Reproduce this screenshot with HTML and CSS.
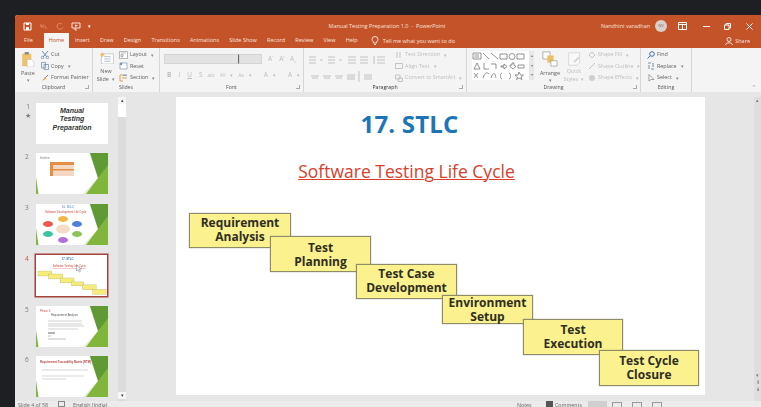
FILE: index.html
```html
<!DOCTYPE html>
<html lang="en">
<head>
<meta charset="utf-8">
<title>Manual Testing Preparation 1.0 - PowerPoint</title>
<link rel="stylesheet" href="styles.css">
</head>
<body>
<svg class="defs" width="0" height="0">
  <symbol id="green" viewBox="0 0 72 41">
    <path d="M47 41L62 25L53 0H72V41Z" fill="#e4ecd8"/>
    <path d="M54 0H72V22L62 25Z" fill="#5f9a34"/>
    <path d="M62 25L72 12V41H50Z" fill="#82b53c"/>
    <path d="M0 41V24L2.500 41Z" fill="#84b53f"/>
  </symbol>
</svg>
<div class="window">
  <header class="titlebar">
    <div class="qat">
      <svg width="9" height="9" viewBox="0 0 9 9"><path d="M1 1H8V8H1Z" fill="none" stroke="#fff"/><path d="M3 1H6V3H3ZM3 5H6V8H3Z" fill="#fff"/></svg>
      <svg class="dim" width="9" height="9" viewBox="0 0 9 9"><path d="M2 2V5H5M2 5C4 2 7 3 7 7" fill="none" stroke="#e08a68"/></svg>
      <svg class="dim" width="9" height="9" viewBox="0 0 9 9"><path d="M7 2A3 3 0 1 0 8 5" fill="none" stroke="#e08a68"/></svg>
      <svg width="10" height="9" viewBox="0 0 10 9"><path d="M1 1H9V6H1ZM4 6V8H6" fill="none" stroke="#f6e2d8"/><path d="M4 2.500L7 3.500L4 5Z" fill="#f6e2d8"/></svg>
      <span class="qat-more">▾</span>
    </div>
    <div class="doc-title">Manual Testing Preparation 1.0 &nbsp;-&nbsp; PowerPoint</div>
    <div class="win-tools">
      <span class="user">Nandhini varadhan</span>
      <span class="avatar">NV</span>
      <svg class="tool-box" width="9" height="8" viewBox="0 0 9 8"><path d="M.5.5H8.500V7.500H.5ZM.5 2.500H8.500M4.500 2.500V7.500" fill="none" stroke="#fff"/></svg>
      <svg class="tool-min" width="7" height="7" viewBox="0 0 7 7"><path d="M0 3.500H7" stroke="#fff"/></svg>
      <svg class="tool-max" width="7" height="7" viewBox="0 0 7 7"><path d="M.5 2H5V6.500H.5ZM2 2V.5H6.500V5H5" fill="none" stroke="#fff"/></svg>
      <svg class="tool-x" width="7" height="7" viewBox="0 0 7 7"><path d="M.5.5L6.500 6.500M6.500.5L.5 6.500" stroke="#fff"/></svg>
    </div>
  </header>

  <nav class="tabs">
    <span class="tab">File</span>
    <span class="tab active">Home</span>
    <span class="tab">Insert</span>
    <span class="tab">Draw</span>
    <span class="tab">Design</span>
    <span class="tab">Transitions</span>
    <span class="tab">Animations</span>
    <span class="tab">Slide Show</span>
    <span class="tab">Record</span>
    <span class="tab">Review</span>
    <span class="tab">View</span>
    <span class="tab">Help</span>
    <span class="tell">
      <svg width="8" height="10" viewBox="0 0 8 10"><path d="M2.500 7C2.500 5 1 5 1 3.500A3 3 0 0 1 7 3.500C7 5 5.500 5 5.500 7ZM3 8.500H5" fill="none" stroke="#fff" stroke-width=".8"/></svg>
      Tell me what you want to do
    </span>
    <span class="share">
      <svg width="8" height="8" viewBox="0 0 8 8"><circle cx="4" cy="2.500" r="2" fill="none" stroke="#fff" stroke-width=".8"/><path d="M.5 8C1 5 7 5 7.500 8" fill="none" stroke="#fff" stroke-width=".8"/></svg>
      Share
    </span>
  </nav>

  <section class="ribbon">
    <div class="group g-clip">
      <div class="group-body">
        <div class="big paste">
          <svg width="14" height="18" viewBox="0 0 14 18"><path d="M0 2H11V17H0Z" fill="#eec36a"/><path d="M3 0H8V3H3Z" fill="#8a8a8a"/><path d="M6 9H11L14 12V18H6Z" fill="#fff" stroke="#aaa" stroke-width=".5"/></svg>
          <span>Paste</span>
          <i class="caret">▾</i>
        </div>
        <div class="rows">
          <div class="row"><svg width="8" height="8" viewBox="0 0 8 8"><path d="M1 0L6 6M7 0L2 6" stroke="#6d87a8" fill="none"/><circle cx="1.500" cy="6.500" r="1.300" fill="none" stroke="#6d87a8" stroke-width=".7"/><circle cx="6.500" cy="6.500" r="1.300" fill="none" stroke="#6d87a8" stroke-width=".7"/></svg>Cut</div>
          <div class="row"><svg width="8" height="8" viewBox="0 0 8 8"><path d="M.5.5H4.500V6H.5ZM3 2.500H7.500V7.500H3Z" fill="#eef2f7" stroke="#6d87a8" stroke-width=".7"/></svg>Copy <i class="caret side">▾</i></div>
          <div class="row"><svg width="8" height="8" viewBox="0 0 8 8"><path d="M4 4L7 1" stroke="#8c6fb0"/><path d="M1 7L4 3L5 5Z" fill="#e3a63c"/></svg>Format Painter</div>
        </div>
      </div>
      <div class="group-label">Clipboard<b class="launch"></b></div>
    </div>

    <div class="group g-slides">
      <div class="group-body">
        <div class="big newslide">
          <svg width="15" height="13" viewBox="0 0 15 13"><path d="M2 2H15V13H2Z" fill="#fff" stroke="#a9a9a9" stroke-width=".6"/><path d="M5 5H12M5 7.500H12M5 10H12" stroke="#8aa0bb" stroke-width=".7"/><path d="M3 0L4 2L6 3L4 4L3 6L2 4L0 3L2 2Z" fill="#edc05b"/></svg>
          <span>New<br>Slide <i class="caret side">▾</i></span>
        </div>
        <div class="rows">
          <div class="row"><svg width="9" height="8" viewBox="0 0 9 8"><path d="M.5.5H8.500V7.500H.5ZM2 2H7M2 3.500V6H4V3.500Z" fill="#fff" stroke="#8a8a8a" stroke-width=".6"/></svg>Layout <i class="caret side">▾</i></div>
          <div class="row"><svg width="9" height="8" viewBox="0 0 9 8"><path d="M1 1H8V7H1Z" fill="#fff" stroke="#7f94ad" stroke-width=".7"/><path d="M.5 2L3 .5V3.500Z" fill="#5b7fae"/></svg>Reset</div>
          <div class="row"><svg width="9" height="8" viewBox="0 0 9 8"><path d="M1 1H4M1 1V7H4M3 4H8" stroke="#d6a24a" fill="none"/><path d="M4 .5H8V2H4Z" fill="#8da6c4"/></svg>Section <i class="caret side">▾</i></div>
        </div>
      </div>
      <div class="group-label">Slides</div>
    </div>

    <div class="group g-font">
      <div class="group-body col">
        <div class="font-top">
          <span class="fbox name"></span><span class="fbox size"></span>
          <span class="off glyph first">A<sup>^</sup></span><span class="off glyph">A<sup>v</sup></span><span class="off glyph wide">A<sub>o</sub></span>
        </div>
        <div class="font-bottom off">
          <b>B</b><i>I</i><u>U</u><span>S</span><span class="tiny">abc</span><span class="tiny">AV</span><span class="tiny">▾</span><span class="tiny">Aa</span><span class="tiny">▾</span><span class="gapl">A</span><span class="tiny">▾</span><span class="gapl">A</span><span class="tiny">▾</span>
        </div>
      </div>
      <div class="group-label">Font<b class="launch"></b></div>
    </div>

    <div class="group g-para">
      <div class="group-body">
        <div class="para-icons">
          <svg width="84" height="32" viewBox="0 0 84 32">
            <g fill="none" stroke="#bcbcbc" stroke-width=".9">
              <path d="M2 6H9M2 9H9M2 12H9M13 9H16"/>
              <path d="M21 6H28M21 9H28M21 12H28M32 9H35"/>
              <path d="M41 6H49M41 9H49M41 12H49"/>
              <path d="M53 6H61M53 9H61M53 12H61"/>
              <path d="M67 5V13M70 6H78M70 9H78M70 12H78"/>
              <path d="M4 25H12M5 27H11"/>
              <path d="M16 25H24M17 27H23"/>
              <path d="M28 25H36M29 27H35"/>
              <path d="M40 24H48M40 26H48M40 28H48"/>
              <path d="M52 20V31M57 24H65M57 26H65M57 28H65"/>
            </g>
          </svg>
        </div>
        <div class="rows text-dir off">
          <div class="row"><svg width="8" height="8" viewBox="0 0 8 8"><path d="M2 1V7M5 1V7" stroke="#c4c4c4"/></svg>Text Direction <i class="caret side">▾</i></div>
          <div class="row"><svg width="8" height="8" viewBox="0 0 8 8"><path d="M.5 1.500H7.500V6.500H.5Z" fill="none" stroke="#c4c4c4"/></svg>Align Text <i class="caret side">▾</i></div>
          <div class="row"><svg width="8" height="8" viewBox="0 0 8 8"><path d="M.5 1H5V5H.5ZM3 4H7.500V7.500H3Z" fill="none" stroke="#c4c4c4"/></svg>Convert to SmartArt <i class="caret side">▾</i></div>
        </div>
      </div>
      <div class="group-label strong">Paragraph<b class="launch"></b></div>
    </div>

    <div class="group g-draw">
      <div class="group-body">
        <div class="gallery">
          <svg width="57" height="29" viewBox="0 0 57 29">
            <g fill="none" stroke="#666" stroke-width=".7">
              <path d="M1 2H9V8H1ZM2.500 4H7M2.500 6H7"/><path d="M11 2L17 8M19 2L26 8"/><path d="M28 3H35V8H28Z"/><circle cx="40" cy="5.500" r="3"/><path d="M45 3H52V8H45Z"/>
              <path d="M2 18L5 12L8 18Z"/><path d="M12 12V18H17"/><path d="M19 13H24V18"/><path d="M29 15H32V13L35 15.500L32 18V16H29Z"/><path d="M38 14H40V12H42V14L44 15.500L41 18L38 15.500Z"/><path d="M46 14H52V17H46Z"/>
              <path d="M2 22L6 27M6 22L2 27"/><path d="M11 27C13 21 15 21 17 23"/><path d="M19 27C21 21 23 21 24 27"/><path d="M30 22C28 22 29 25 28 25C29 25 28 28 30 28"/><path d="M37 22C39 22 38 25 39 25C38 25 39 28 37 28"/><path d="M47 21L48.500 24H51.500L49 26L50 28.500L47 27L44.500 28.500L45.500 26L43 24H46Z"/>
            </g>
          </svg>
          <div class="gallery-bar"><span>▴</span><span>▾</span><span>▾</span></div>
        </div>
        <div class="big arrange">
          <svg width="18" height="18" viewBox="0 0 18 18"><path d="M1 1H9V9H1Z" fill="#fff" stroke="#8a8a8a" stroke-width=".7"/><path d="M6 5H13V13H6Z" fill="#edc05b"/><path d="M10 11H17V17H10Z" fill="#fff" stroke="#8a8a8a" stroke-width=".7"/></svg>
          <span>Arrange</span>
          <i class="caret">▾</i>
        </div>
        <div class="big quick off">
          <svg width="17" height="18" viewBox="0 0 17 18"><path d="M1 1H15V14L12 17H1Z" fill="#f8f8f8" stroke="#d2d2d2"/><path d="M8 13L14 7" stroke="#cfcfcf" stroke-width="2"/></svg>
          <span>Quick<br>Styles <i class="caret side">▾</i></span>
        </div>
        <div class="rows shape off">
          <div class="row"><svg width="8" height="8" viewBox="0 0 8 8"><path d="M1 4L4 1L7 4L4 7Z" fill="none" stroke="#c4c4c4"/></svg>Shape Fill <i class="caret side">▾</i></div>
          <div class="row"><svg width="8" height="8" viewBox="0 0 8 8"><path d="M1 7L7 1" stroke="#c4c4c4"/></svg>Shape Outline <i class="caret side">▾</i></div>
          <div class="row"><svg width="8" height="8" viewBox="0 0 8 8"><circle cx="4" cy="4" r="3" fill="#cfcfcf"/></svg>Shape Effects <i class="caret side">▾</i></div>
        </div>
      </div>
      <div class="group-label">Drawing<b class="launch"></b></div>
    </div>

    <div class="group g-edit">
      <div class="group-body">
        <div class="rows">
          <div class="row"><svg width="8" height="8" viewBox="0 0 8 8"><circle cx="5" cy="3" r="2.300" fill="none" stroke="#3f6fa8"/><path d="M3.500 4.500L.5 7.500" stroke="#3f6fa8"/></svg>Find</div>
          <div class="row"><svg width="8" height="8" viewBox="0 0 8 8"><path d="M1 1H4M4 7H7M6 1V5M2 3V7" stroke="#7a8b9e"/></svg>Replace <i class="caret side">▾</i></div>
          <div class="row"><svg width="8" height="8" viewBox="0 0 8 8"><path d="M2 .5V7L4 5.500H7Z" fill="#fff" stroke="#7a7a7a" stroke-width=".7"/></svg>Select <i class="caret side">▾</i></div>
        </div>
      </div>
      <div class="group-label">Editing</div>
    </div>
    <div class="collapse">⌃</div>
  </section>
  <div class="ribbon-foot"></div>

  <main class="workspace">
    <aside class="thumbs">
      <div class="thumb-row">
        <div class="num">1<br>★</div>
        <div class="thumb t1">Manual<br>Testing<br>Preparation</div>
      </div>
      <div class="thumb-row">
        <div class="num">2</div>
        <svg class="thumb" viewBox="0 0 72 41">
          <use href="#green"/>
          <text x="4" y="6" class="tiny-t big-t" fill="#888">Index</text>
          <rect x="14" y="9" width="24" height="14" fill="#f3d9c4"/><rect x="14" y="9" width="24" height="3" fill="#e58e45"/><rect x="14" y="16" width="24" height="1.500" fill="#e58e45"/><rect x="14" y="9" width="3" height="14" fill="#e58e45"/>
        </svg>
      </div>
      <div class="thumb-row">
        <div class="num">3</div>
        <svg class="thumb" viewBox="0 0 72 41">
          <use href="#green"/>
          <text x="26" y="4" class="tiny-t" fill="#3d78b8">16. SDLC</text>
          <text x="9" y="9" class="tiny-t" fill="#d0443a">Software Development Life Cycle</text>
          <ellipse cx="27" cy="15" rx="5" ry="3" fill="#f0b945"/><ellipse cx="41" cy="20" rx="5" ry="3" fill="#4f7fd8"/><ellipse cx="41" cy="30" rx="5" ry="3" fill="#8cc45a"/><ellipse cx="27" cy="36" rx="5" ry="3" fill="#b071d8"/><ellipse cx="12" cy="30" rx="5" ry="3" fill="#3cc4a0"/><ellipse cx="12" cy="20" rx="5" ry="3" fill="#ec5a4c"/><ellipse cx="27" cy="25" rx="7" ry="4.500" fill="#f4dcc8"/>
        </svg>
      </div>
      <div class="thumb-row current">
        <div class="num">4</div>
        <svg class="thumb" viewBox="0 0 72 41">
          <text x="26" y="5" class="tiny-t b" fill="#3d78b8">17. STLC</text>
          <text x="17" y="12" class="tiny-t under" fill="#d0443a">Software Testing Life Cycle</text>
          <g fill="#f5ec7a" stroke="#a8a46a" stroke-width=".3">
            <rect x="2" y="16" width="14" height="5"/><rect x="13" y="19" width="14" height="5"/><rect x="24.500" y="23" width="14" height="5"/><rect x="36" y="27" width="12.500" height="4"/><rect x="47" y="30" width="14" height="5"/><rect x="57.500" y="34.500" width="13.600" height="5"/>
          </g>
          <path d="M41 10V16L42.500 14.500L44 17L45 16.500L44 14H46Z" fill="#fff" stroke="#444" stroke-width=".4"/>
        </svg>
      </div>
      <div class="thumb-row">
        <div class="num">5</div>
        <svg class="thumb" viewBox="0 0 72 41">
          <use href="#green"/>
          <text x="4" y="6" class="tiny-t" fill="#d0443a">Phase 1:</text>
          <text x="15" y="10" class="tiny-t" fill="#555">Requirement Analysis</text>
          <path d="M12 15H46M12 18H46M12 20H48M12 23H42" stroke="#b4b4b4" stroke-width=".6"/><path d="M12 27H19" stroke="#444" stroke-width=".8"/><path d="M12 30H15M12 33H30" stroke="#999" stroke-width=".6"/>
        </svg>
      </div>
      <div class="thumb-row">
        <div class="num">6</div>
        <svg class="thumb" viewBox="0 0 72 41">
          <use href="#green"/>
          <text x="4" y="7" class="tiny-t b" fill="#b5473f">Requirement Traceability Matrix (RTM)</text>
          <path d="M6 14H52M6 20H48M6 23H30" stroke="#c4c4c4" stroke-width=".7"/>
        </svg>
      </div>
    </aside>
    <div class="vscroll">
      <span class="arrow">▴</span><span class="vthumb"></span><span class="arrow end">▾</span>
    </div>
    <div class="canvas">
      <article class="slide">
        <h1>17. STLC</h1>
        <h2>Software Testing Life Cycle</h2>
        <div class="diagram">
          <div class="node n1">Requirement<br>Analysis</div>
          <div class="node n2">Test<br>Planning</div>
          <div class="node n3">Test Case<br>Development</div>
          <div class="node n4">Environment<br>Setup</div>
          <div class="node n5">Test<br>Execution</div>
          <div class="node n6">Test Cycle<br>Closure</div>
        </div>
      </article>
      <div class="canvas-bar"><span class="bar-top">▴</span><span>▾</span><span>⇞</span><span>⇟</span></div>
    </div>
  </main>

  <footer class="status">
    <span class="st-a">Slide 4 of 58</span>
    <span class="st-icon"></span>
    <span class="st-b">English (India)</span>
    <span class="st-c">Notes</span>
    <span class="st-dark"></span>
    <span class="st-d">Comments</span>
    <span class="st-e active"></span><span class="st-e"></span><span class="st-e"></span><span class="st-e"></span>
    <span class="st-f"></span>
  </footer>
</div>
</body>
</html>
```

FILE: styles.css
```css
* { box-sizing: border-box; }
html, body { margin: 0; height: 100%; }
body {
  background: #1d1f23;
  padding: 15px 0 0 15px;
  overflow: hidden;
  font-family: "Open Sans", "Liberation Sans", sans-serif;
}
.defs { position: absolute; }
.window {
  height: 392px;
  display: flex;
  flex-direction: column;
  background: #e6e6e6;
  border-radius: 3px 0 0 0;
  overflow: hidden;
  filter: blur(.3px);
}

/* title bar */
.titlebar {
  height: 18px;
  flex: none;
  background: #c5532a;
  color: #fff;
  display: flex;
  align-items: center;
  font-size: 5.500px;
  padding-top: 4px;
  white-space: nowrap;
}
.qat { width: 261px; flex: none; display: flex; align-items: center; gap: 7px; padding-left: 8px; }
.qat-more { font-size: 5px; }
.doc-title { width: 222px; flex: none; text-align: center; color: #f6e2d8; }
.win-tools { flex: 1; display: flex; align-items: center; padding-left: 103px; }
.user { color: #f6e2d8; width: 51px; flex: none; }
.avatar {
  width: 12px; height: 12px; border-radius: 50%; flex: none;
  background: #d9cfc9; color: #8a6a5e;
  font-size: 4px; text-align: center; line-height: 12px;
  margin-left: 3px;
}
.tool-box { margin-left: 11px; flex: none; }
.tool-min { margin-left: 16px; flex: none; }
.tool-max { margin-left: 14px; flex: none; }
.tool-x { margin-left: 15px; flex: none; }

/* tabs */
.tabs {
  height: 15px;
  flex: none;
  background: #c5532a;
  color: #f8e6dd;
  display: flex;
  align-items: center;
  font-size: 5.500px;
  padding-left: 4px;
  white-space: nowrap;
}
.tab { padding: 0 5.100px; height: 15px; line-height: 15px; flex: none; }
.tab.active { background: #f4f4f4; color: #c5532a; margin: 0 1px 0 6px; width: 25px; text-align: center; padding: 0; }
.tell { display: flex; align-items: center; gap: 4px; margin-left: 8px; }
.share { display: flex; align-items: center; gap: 2px; margin-left: auto; margin-right: 11px; }

/* ribbon */
.ribbon {
  height: 44px;
  flex: none;
  background: #f4f4f4;
  display: flex;
  position: relative;
  color: #606060;
  font-size: 5.400px;
  white-space: nowrap;
}
.ribbon-foot { height: 5px; flex: none; background: #e6e6e6; }
.group {
  display: flex;
  flex-direction: column;
  border-right: 1px solid #d6d6d6;
  position: relative;
  flex: none;
}
.group-body { flex: 1; display: flex; min-height: 0; }
.group-body.col { flex-direction: column; }
.group-label {
  height: 9px;
  text-align: center;
  font-size: 5.200px;
  line-height: 8px;
  color: #555;
}
.group-label.strong { color: #333; }
.launch {
  position: absolute; right: 3px; bottom: 3px;
  width: 4px; height: 4px;
  border-right: 1px solid #aaa; border-bottom: 1px solid #aaa;
}
.g-clip { width: 78px; }
.g-slides { width: 67px; }
.g-font { width: 144px; }
.g-para { width: 163px; }
.g-draw { width: 174px; }
.g-edit { width: 51px; }
.big {
  display: flex; flex-direction: column; align-items: center;
  text-align: center; line-height: 8px; flex: none;
}
.big span { margin-top: 2px; }
.caret { font-style: normal; font-size: 4.500px; line-height: 6px; color: #888; }
.caret.side { margin-left: 2px; }
.paste { width: 26px; padding-top: 4px; }
.rows { display: flex; flex-direction: column; padding-top: 2px; gap: 2px; }
.row { height: 9.500px; display: flex; align-items: center; gap: 2px; line-height: 9px; }
.off, .off .caret { color: #bdbdbd; }
.newslide { width: 26px; padding-top: 4px; }
.newslide span { margin-top: 3px; }

.font-top { display: flex; align-items: center; padding: 5px 0 0 4px; height: 17px; }
.fbox { height: 10px; background: #e2e2e2; border: 1px solid #d4d4d4; flex: none; }
.fbox.name { width: 75px; border-right: 1px solid #666; }
.fbox.size { width: 23px; }
.glyph { font-size: 6.500px; margin-left: 5px; }
.glyph.first { margin-left: 6px; }
.glyph sup, .glyph sub { font-size: 3.500px; }
.font-bottom { display: flex; align-items: center; gap: 7px; padding: 5px 0 0 7px; font-size: 6.500px; }
.font-bottom .tiny { font-size: 4.500px; margin-left: -2px; }
.font-bottom .gapl { margin-left: 5px; }

.para-icons { width: 91px; padding: 3px 0 0 3px; flex: none; }

.gallery { display: flex; margin: 3px 0 0 5px; height: 29px; flex: none; }
.gallery svg { background: #fff; }
.gallery-bar {
  width: 5px; display: flex; flex-direction: column;
  background: #e8e8e8; font-size: 4px; text-align: center; color: #777;
}
.gallery-bar span { flex: 1; line-height: 9px; }
.arrange { width: 24px; margin-left: 4px; padding-top: 3px; }
.quick { width: 20px; padding-top: 4px; margin-left: 2px; }
.quick span { margin-top: 1px; }
.shape { margin-left: 4px; }
.g-edit .rows { padding-left: 6px; }
.collapse {
  position: absolute; right: 4px; bottom: 0;
  font-size: 7px; color: #aaa; line-height: 8px;
}

/* workspace */
.workspace { flex: 1; min-height: 0; display: flex; overflow: hidden; }
.thumbs { width: 103px; flex: none; padding: 5.500px 0 0 0; display: flex; flex-direction: column; gap: 9.800px; }
.thumb-row { display: flex; height: 41px; flex: none; padding-left: 21px; position: relative; }
.num {
  position: absolute; left: 10px; top: -1px;
  font-size: 6.500px; line-height: 9px; color: #7a7a7a; text-align: center;
}
.thumb {
  width: 72px; height: 41px; background: #fff; display: block; flex: none;
}
.t1 {
  font: italic 700 7px/8.500px "Liberation Sans", sans-serif;
  color: #333;
  text-align: center;
  padding-top: 4px;
}
.current .num { color: #c0563a; }
.current .thumb { width: 71px; box-shadow: 0 0 0 1.500px #a4423e; }
.tiny-t { font: 2.800px "Liberation Sans", sans-serif; }
.tiny-t.b { font-weight: 700; }
.tiny-t.under { text-decoration: underline; }
.tiny-t.big-t { font-size: 4px; }

.vscroll {
  width: 8px; flex: none; background: #dcdcdc;
  display: flex; flex-direction: column; align-items: stretch;
}
.arrow { height: 7px; background: #f6f6f6; font-size: 5px; line-height: 7px; text-align: center; color: #444; flex: none; }
.vthumb { height: 13px; background: #fff; flex: none; }
.arrow.end { margin-top: auto; margin-bottom: 2px; }

.canvas { flex: 1; min-width: 0; display: flex; padding-left: 50px; }
.slide {
  width: 529px; height: 298px; flex: none;
  background: #fff;
  display: flex; flex-direction: column; align-items: center;
  position: relative;
}
h1 {
  margin: 10px 62px 0 0; font: 700 24px/34px "Open Sans", sans-serif;
  color: #1e75b5; letter-spacing: .2px;
}
h2 {
  margin: 18px 68px 0 0; font: 400 17.500px/24px "Open Sans", sans-serif;
  color: #d8402c; text-decoration: underline; text-decoration-thickness: 1px;
}
.diagram { position: absolute; inset: 0; }
.node {
  position: absolute;
  background: #fbf28f;
  border: 1px solid #8e8c64;
  box-shadow: 0 0 1px #888;
  color: #2e2e22;
  font: 700 12px/14.300px "Open Sans", sans-serif;
  text-align: center;
  padding-top: 2px;
}
.n1 { left: 13px; top: 116px; width: 102px; height: 35px; }
.n2 { left: 94px; top: 139px; width: 101px; height: 36px; padding-top: 4px; }
.n3 { left: 180px; top: 167px; width: 101px; height: 35px; }
.n4 { left: 266px; top: 198px; width: 91px; height: 29px; padding-top: 0; }
.n5 { left: 347px; top: 222px; width: 100px; height: 36px; padding-top: 3px; }
.n6 { left: 423px; top: 253px; width: 100px; height: 36px; padding-top: 3px; }
.canvas-bar {
  margin-left: auto; width: 7px;
  background: #dedede;
  display: flex; flex-direction: column; justify-content: flex-end;
  font-size: 5px; text-align: center; color: #777; line-height: 7px;
  padding-bottom: 8px;
}
.bar-top { margin-bottom: auto; }

/* status */
.status {
  height: 6px; flex: none;
  background: #ebebeb;
  display: flex; align-items: flex-start;
  font-size: 5.300px; line-height: 9px; color: #666;
  padding-left: 3px;
  overflow: hidden;
  white-space: nowrap;
}
.st-a { width: 40px; flex: none; }
.st-icon { width: 7px; height: 6px; border: 1px solid #888; flex: none; margin-right: 8px; }
.st-b { width: 60px; flex: none; }
.st-c { margin-left: 384px; flex: none; width: 29px; }
.st-dark { width: 7px; height: 6px; background: #555; flex: none; margin-right: 2px; }
.st-d { flex: none; width: 33px; }
.st-e { width: 10px; height: 8px; margin-right: 10px; border: 1px solid #999; flex: none; margin-top: 1px; }
.st-e.active { width: 19px; margin-top: 0; background: #cfcfcf; border-color: #cfcfcf; margin-right: 5px; }
.st-f { width: 50px; height: 1px; flex: none; }
```
